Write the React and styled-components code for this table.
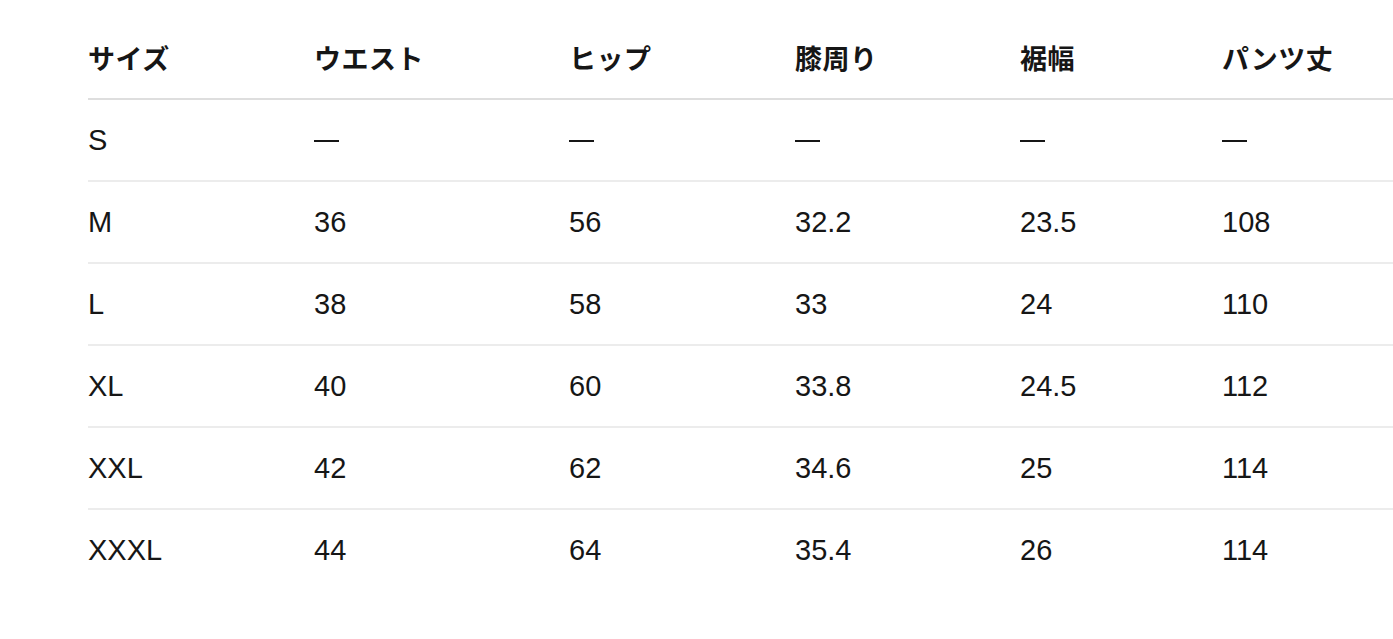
import React from 'react'
import styled, { createGlobalStyle } from 'styled-components'

const GlobalStyle = createGlobalStyle`
  html, body {
    margin: 0;
    padding: 0;
    background: #ffffff;
    overflow: hidden;
  }
`

const Page = styled.div`
  padding: 17px 0 0 88px;
  width: 1393px;
  box-sizing: border-box;
`

const SizeTable = styled.table`
  border-collapse: collapse;
  table-layout: fixed;
  width: 1334px;
  color: #161616;
  font-family: "Liberation Sans", "Noto Sans CJK JP", sans-serif;
`

const HeadCell = styled.th`
  height: 81px;
  padding: 0;
  text-align: left;
  vertical-align: middle;
  font-family: "Noto Sans CJK JP", sans-serif;
  font-weight: 700;
  font-size: 27px;
  letter-spacing: 0.5px;
  border-bottom: 2px solid #dedede;
`

const Cell = styled.td`
  height: 80px;
  padding: 0;
  text-align: left;
  vertical-align: middle;
  font-size: 29px;
  font-weight: 400;
  border-bottom: ${props => (props.$last ? 'none' : '2px solid #ececec')};
`

const Dash = styled.span`
  display: inline-block;
  width: 25px;
  height: 2px;
  background: #161616;
  vertical-align: middle;
  margin-top: -2px;
`

const widths = [226, 255, 226, 225, 202, 200]
const headers = ['サイズ', 'ウエスト', 'ヒップ', '膝周り', '裾幅', 'パンツ丈']

const rows = [
  ['S', null, null, null, null, null],
  ['M', '36', '56', '32.2', '23.5', '108'],
  ['L', '38', '58', '33', '24', '110'],
  ['XL', '40', '60', '33.8', '24.5', '112'],
  ['XXL', '42', '62', '34.6', '25', '114'],
  ['XXXL', '44', '64', '35.4', '26', '114'],
]

const App = () => {
  return (
    <Page>
      <GlobalStyle />
      <SizeTable>
        <colgroup>
          {widths.map((w, i) => (
            <col key={i} style={{ width: w }} />
          ))}
        </colgroup>
        <thead>
          <tr>
            {headers.map(h => (
              <HeadCell key={h}>{h}</HeadCell>
            ))}
          </tr>
        </thead>
        <tbody>
          {rows.map((row, r) => (
            <tr key={row[0]}>
              {row.map((v, c) => (
                <Cell key={c} $last={r === rows.length - 1}>
                  {v === null ? <Dash /> : v}
                </Cell>
              ))}
            </tr>
          ))}
        </tbody>
      </SizeTable>
    </Page>
  )
}

export default App
